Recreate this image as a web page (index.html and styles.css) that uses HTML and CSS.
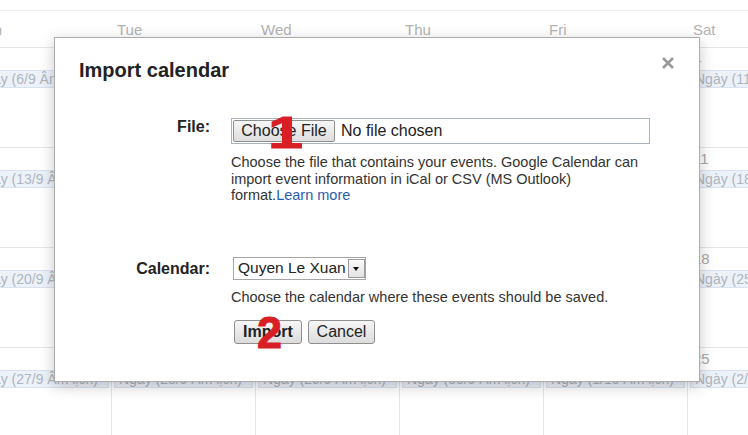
FILE: index.html
```html
<!DOCTYPE html>
<html lang="en">
<head>
    <meta charset="UTF-8">
    <meta name="viewport" content="width=device-width, initial-scale=1.0">
    <title>Import calendar</title>
    <link rel="stylesheet" href="styles.css">
</head>
<body>
    <div class="calendar">
        <div class="cal-head">
            <div>Mon</div><div>Tue</div><div>Wed</div><div>Thu</div><div>Fri</div><div>Sat</div><div>Sun</div>
        </div>
        <div class="week">
            <div class="day"><div class="num">30</div><div class="chip">Ngày (6/9 Âm lịch)</div></div>
            <div class="day"><div class="num">31</div><div class="chip">Ngày (7/9 Âm lịch)</div></div>
            <div class="day"><div class="num">1</div><div class="chip">Ngày (8/9 Âm lịch)</div></div>
            <div class="day"><div class="num">2</div><div class="chip">Ngày (9/9 Âm lịch)</div></div>
            <div class="day"><div class="num">3</div><div class="chip">Ngày (10/9 Âm lịch)</div></div>
            <div class="day"><div class="num">4</div><div class="chip">Ngày (11/9 Âm lịch)</div></div>
            <div class="day"><div class="num">5</div><div class="chip">Ngày (12/9 Âm lịch)</div></div>
        </div>
        <div class="week">
            <div class="day"><div class="num">6</div><div class="chip">Ngày (13/9 Âm lịch)</div></div>
            <div class="day"><div class="num">7</div><div class="chip">Ngày (14/9 Âm lịch)</div></div>
            <div class="day"><div class="num">8</div><div class="chip">Ngày (15/9 Âm lịch)</div></div>
            <div class="day"><div class="num">9</div><div class="chip">Ngày (16/9 Âm lịch)</div></div>
            <div class="day"><div class="num">10</div><div class="chip">Ngày (17/9 Âm lịch)</div></div>
            <div class="day"><div class="num">11</div><div class="chip">Ngày (18/9 Âm lịch)</div></div>
            <div class="day"><div class="num">12</div><div class="chip">Ngày (19/9 Âm lịch)</div></div>
        </div>
        <div class="week">
            <div class="day"><div class="num">13</div><div class="chip">Ngày (20/9 Âm lịch)</div></div>
            <div class="day"><div class="num">14</div><div class="chip">Ngày (21/9 Âm lịch)</div></div>
            <div class="day"><div class="num">15</div><div class="chip">Ngày (22/9 Âm lịch)</div></div>
            <div class="day"><div class="num">16</div><div class="chip">Ngày (23/9 Âm lịch)</div></div>
            <div class="day"><div class="num">17</div><div class="chip">Ngày (24/9 Âm lịch)</div></div>
            <div class="day"><div class="num">18</div><div class="chip">Ngày (25/9 Âm lịch)</div></div>
            <div class="day"><div class="num">19</div><div class="chip">Ngày (26/9 Âm lịch)</div></div>
        </div>
        <div class="week">
            <div class="day"><div class="num">20</div><div class="chip">Ngày (27/9 Âm lịch)</div></div>
            <div class="day"><div class="num">21</div><div class="chip">Ngày (28/9 Âm lịch)</div></div>
            <div class="day"><div class="num">22</div><div class="chip">Ngày (29/9 Âm lịch)</div></div>
            <div class="day"><div class="num">23</div><div class="chip">Ngày (30/9 Âm lịch)</div></div>
            <div class="day"><div class="num">24</div><div class="chip">Ngày (1/10 Âm lịch)</div></div>
            <div class="day"><div class="num">25</div><div class="chip">Ngày (2/10 Âm lịch)</div></div>
            <div class="day"><div class="num">26</div><div class="chip">Ngày (3/10 Âm lịch)</div></div>
        </div>
    </div>

    <div class="dialog">
        <h1 class="dialog-title">Import calendar</h1>
        <a href="#" class="close">
            <svg width="12" height="12" viewBox="0 0 12 12"><path d="M1 1L11 11M11 1L1 11" stroke="#9a9a9a" stroke-width="2.6"/></svg>
        </a>

        <div class="row">
            <div class="label">File:</div>
            <div>
                <div class="file-box">
                    <span class="file-btn">Choose File</span>
                    <span class="file-name">No file chosen</span>
                </div>
                <p class="help">Choose the file that contains your events. Google Calendar can import event information in iCal or CSV (MS Outlook) format.<a href="#">Learn more</a></p>
            </div>
        </div>

        <div class="row row-cal">
            <div class="label label-cal">Calendar:</div>
            <div>
                <div class="select">
                    <span class="select-text">Quyen Le Xuan</span>
                    <span class="select-arrow"></span>
                </div>
                <p class="help help-cal">Choose the calendar where these events should be saved.</p>
                <div class="actions">
                    <button class="btn btn-primary">Import</button>
                    <button class="btn">Cancel</button>
                </div>
            </div>
        </div>

        <span class="step step-1">1</span>
        <span class="step step-2">2</span>
    </div>
</body>
</html>
```

FILE: styles.css
```css
/* Calendar behind the dialog */
body {
    margin: 0;
    width: 748px;
    height: 435px;
    overflow: hidden;
    position: relative;
    background: #fff;
    font-family: "Liberation Sans", Arial, sans-serif;
}
.calendar {
    margin-left: -33px;
    padding-top: 10px;
}
.cal-head {
    display: grid;
    grid-template-columns: repeat(7, 144px);
    height: 36px;
    border-top: 1px solid #f0f0f0;
    border-bottom: 1px solid #e6e6e6;
}
.cal-head div {
    padding: 10px 0 0 6px;
    font-size: 15px;
    line-height: 18px;
    color: #b3b3b3;
}
.week {
    display: grid;
    grid-template-columns: repeat(7, 144px);
    height: 99px;
    border-bottom: 1px solid #e6e6e6;
}
.day {
    border-left: 1px solid #e6e6e6;
    padding: 2px 2px 0;
    min-width: 0;
}
.num {
    padding-left: 3px;
    font-size: 15px;
    line-height: 17px;
    color: #a9a9a9;
}
.chip {
    margin-top: 3px;
    padding: 0 4px;
    border: 1px solid #d9e3f0;
    background-color: #edf2f9;
    color: #adb5c0;
    font-size: 14px;
    line-height: 16px;
    white-space: nowrap;
    overflow: hidden;
}

/* Dialog */
.dialog {
    position: absolute;
    left: 54px;
    top: 37px;
    width: 646px;
    height: 345px;
    box-sizing: border-box;
    padding: 20px 24px;
    background-color: #fff;
    border: 1px solid #acacac;
    box-shadow: 0 4px 14px rgba(0,0,0,0.22);
    color: #222;
}
.dialog-title {
    margin: 0 0 36px;
    font-size: 20px;
    line-height: 24px;
    font-weight: bold;
}
.close {
    position: absolute;
    top: 19px;
    right: 25px;
    width: 12px;
    height: 12px;
    display: block;
}
.close svg { display: block; }
.row {
    display: grid;
    grid-template-columns: 131px 419px;
    column-gap: 21px;
}
.row-cal { margin-top: 53px; }
.label {
    text-align: right;
    font-size: 16px;
    line-height: 18px;
    font-weight: bold;
}
.label-cal { padding-top: 3px; }
.file-box {
    display: flex;
    align-items: center;
    height: 26px;
    box-sizing: border-box;
    padding: 1px;
    border: 1px solid #a9b3bd;
}
.file-btn {
    width: 102px;
    height: 22px;
    box-sizing: border-box;
    border: 1px solid #8f8f8f;
    border-radius: 2px;
    background: linear-gradient(#f6f6f6, #dedede);
    font-size: 16px;
    line-height: 20px;
    text-align: center;
}
.file-name {
    margin-left: 6px;
    font-size: 16px;
}
.help {
    margin: 10px 0 0;
    font-size: 14.5px;
    line-height: 16.5px;
    color: #333;
}
.help a {
    color: #2a5db0;
    text-decoration: none;
}
.help-cal { margin-top: 9px; }
.select {
    display: flex;
    width: 133px;
    height: 23px;
    margin-left: 2px;
    box-sizing: border-box;
    border: 1px solid #a5a5a5;
}
.select-text {
    flex: 1;
    padding-left: 4px;
    font-size: 15.5px;
    line-height: 20px;
    white-space: nowrap;
    overflow: hidden;
}
.select-arrow {
    width: 17px;
    flex: none;
    margin: 1px 0;
    box-sizing: border-box;
    border: 1px solid #9c9c9c;
    background: linear-gradient(#fafafa, #e2e2e2);
    position: relative;
}
.select-arrow::after {
    content: "";
    position: absolute;
    left: 4px;
    top: 7px;
    border-left: 3.5px solid transparent;
    border-right: 3.5px solid transparent;
    border-top: 4px solid #111;
}
.actions {
    display: flex;
    gap: 6px;
    margin: 15px 0 0 3px;
}
.btn {
    width: 67px;
    height: 24px;
    padding: 0;
    border: 1px solid #8f8f8f;
    border-radius: 3px;
    background: linear-gradient(#f6f6f6, #dcdcdc);
    font-family: "Liberation Sans", Arial, sans-serif;
    font-size: 16px;
    color: #222;
}
.btn-primary {
    width: 68px;
    font-weight: bold;
}

/* red step numbers drawn on the screenshot */
.step {
    position: absolute;
    font-size: 45px;
    line-height: 45px;
    font-weight: bold;
    color: #d91f26;
    -webkit-text-stroke: 1px #d91f26;
}
.step-1 {
    left: 213px;
    top: 72px;
    transform: scaleX(1.4);
    transform-origin: left top;
}
.step-2 {
    left: 202px;
    top: 272px;
}
```
